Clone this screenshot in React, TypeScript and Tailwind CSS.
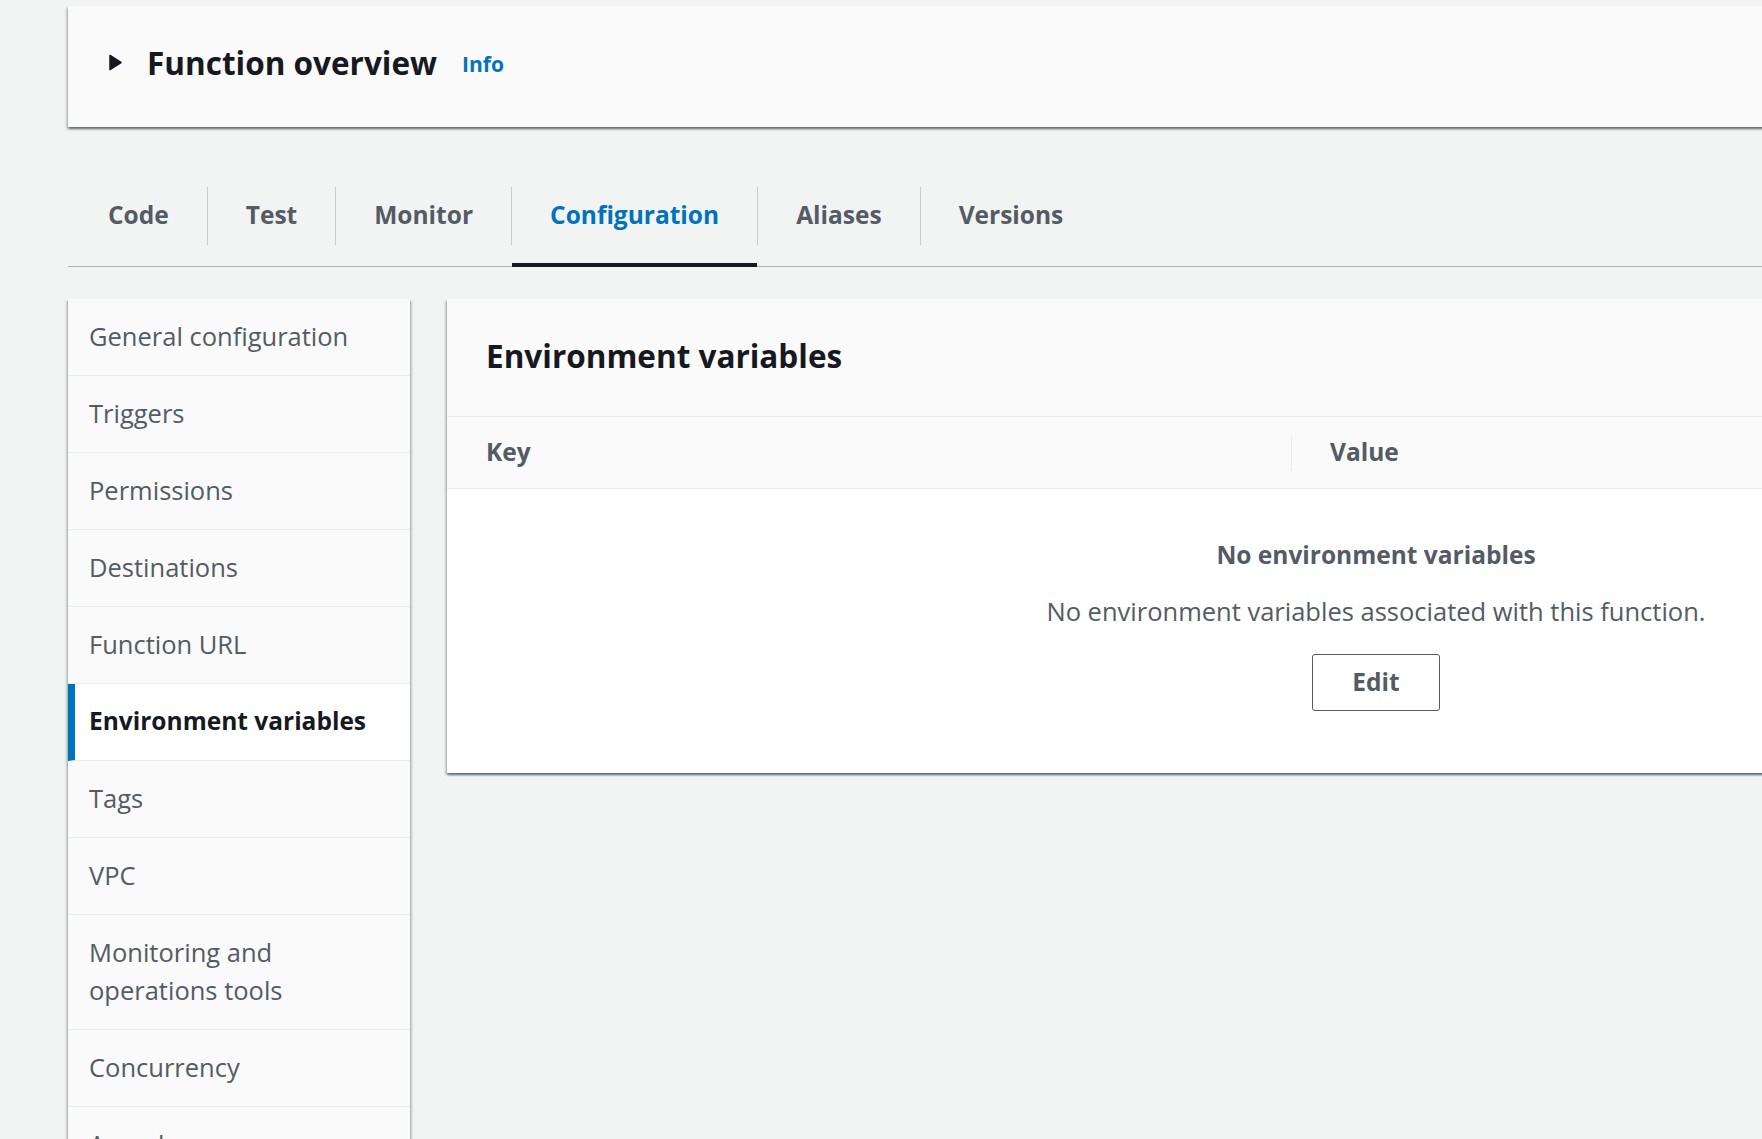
import React from 'react'

const tabs = ['Code', 'Test', 'Monitor', 'Configuration', 'Aliases', 'Versions']

const sideItems = [
  'General configuration',
  'Triggers',
  'Permissions',
  'Destinations',
  'Function URL',
  'Environment variables',
  'Tags',
  'VPC',
  'Monitoring and operations tools',
  'Concurrency',
  'Asynchronous invocation',
]

const cardShadow =
  'shadow-[0_2px_2px_0_rgba(0,28,36,0.45),2px_2px_2px_0_rgba(0,28,36,0.15),-2px_2px_2px_0_rgba(0,28,36,0.15)]'

function Caret() {
  return (
    <svg width="13" height="17" viewBox="0 0 13 17" className="shrink-0">
      <path d="M1 1.5 L12 8.5 L1 15.5 Z" fill="#16191f" stroke="#16191f" strokeWidth="1.5" strokeLinejoin="round" />
    </svg>
  )
}

export default function App() {
  const activeTab = 'Configuration'
  const activeItem = 'Environment variables'

  return (
    <div className="h-screen overflow-hidden bg-[#f2f3f3] pl-[68px] pt-[6px] font-['Open_Sans',sans-serif] text-[#16191f]">
      <div className="w-[2237px]">
        {/* Function overview */}
        <div className={`flex h-[121px] items-center bg-[#fafafa] pb-[8px] pl-[41px] ${cardShadow}`}>
          <Caret />
          <h2 className="ml-[25px] text-[31.5px] font-bold leading-none">Function overview</h2>
          <a className="ml-[25px] mt-[4px] text-[21px] font-bold leading-none text-[#0073bb]">Info</a>
        </div>

        {/* Tabs */}
        <div className="mt-[38px] flex items-center border-b border-[#aab7b8]">
          {tabs.map((tab, i) => (
            <React.Fragment key={tab}>
              {i > 0 && <div className="h-[58px] w-px bg-[#c6cccf]" />}
              <button
                type="button"
                className={`-mb-px flex h-[102px] items-center border-b-4 pt-[2px] text-[24.5px] font-bold leading-none ${
                  i === 0 ? 'pl-[40px] pr-[38px]' : 'px-[38px]'
                } ${tab === activeTab ? 'border-[#16191f] text-[#0073bb]' : 'border-transparent text-[#545b64]'}`}
              >
                {tab}
              </button>
            </React.Fragment>
          ))}
        </div>

        <div className="mt-[32px] flex items-start gap-[37px]">
          {/* Side navigation */}
          <div className={`w-[342px] shrink-0 bg-[#fafafa] ${cardShadow}`}>
            {sideItems.map((item) =>
              item === activeItem ? (
                <div
                  key={item}
                  className="border-b border-l-[7px] border-b-[#eaeded] border-l-[#0073bb] bg-white pb-[20px] pl-[14px] pr-[20px] pt-[18px] text-[24.5px] font-bold leading-[38px] text-[#16191f]"
                >
                  {item}
                </div>
              ) : (
                <div
                  key={item}
                  className="border-b border-[#eaeded] pb-[20px] pl-[21px] pr-[60px] pt-[18px] text-[25.5px] leading-[38px] text-[#545b64]"
                >
                  {item}
                </div>
              )
            )}
          </div>

          {/* Environment variables panel */}
          <div className={`w-[1858px] shrink-0 bg-white ${cardShadow}`}>
            <div className="flex h-[118px] items-center border-b border-[#eaeded] bg-[#fafafa] px-[39px] pb-[4px]">
              <h2 className="text-[31.5px] font-bold leading-none">Environment variables</h2>
            </div>
            <div className="flex h-[72px] items-center border-b border-[#eaeded] bg-[#fafafa] text-[24.5px] font-bold text-[#545b64]">
              <div className="flex h-full w-[844px] items-center pl-[39px]">Key</div>
              <div className="h-[36px] w-px bg-[#eaeded]" />
              <div className="pl-[38px]">Value</div>
            </div>
            <div className="flex flex-col items-center pb-[62px] pt-[47px] text-[#545b64]">
              <div className="text-[24.5px] font-bold leading-[38px]">No environment variables</div>
              <p className="mt-[18px] text-[25.5px] leading-[38px]">
                No environment variables associated with this function.
              </p>
              <button
                type="button"
                className="mt-[24px] flex h-[57px] w-[128px] items-center justify-center rounded-[3px] border border-[#545b64] bg-white text-[24.5px] font-bold text-[#545b64]"
              >
                Edit
              </button>
            </div>
          </div>
        </div>
      </div>
    </div>
  )
}
